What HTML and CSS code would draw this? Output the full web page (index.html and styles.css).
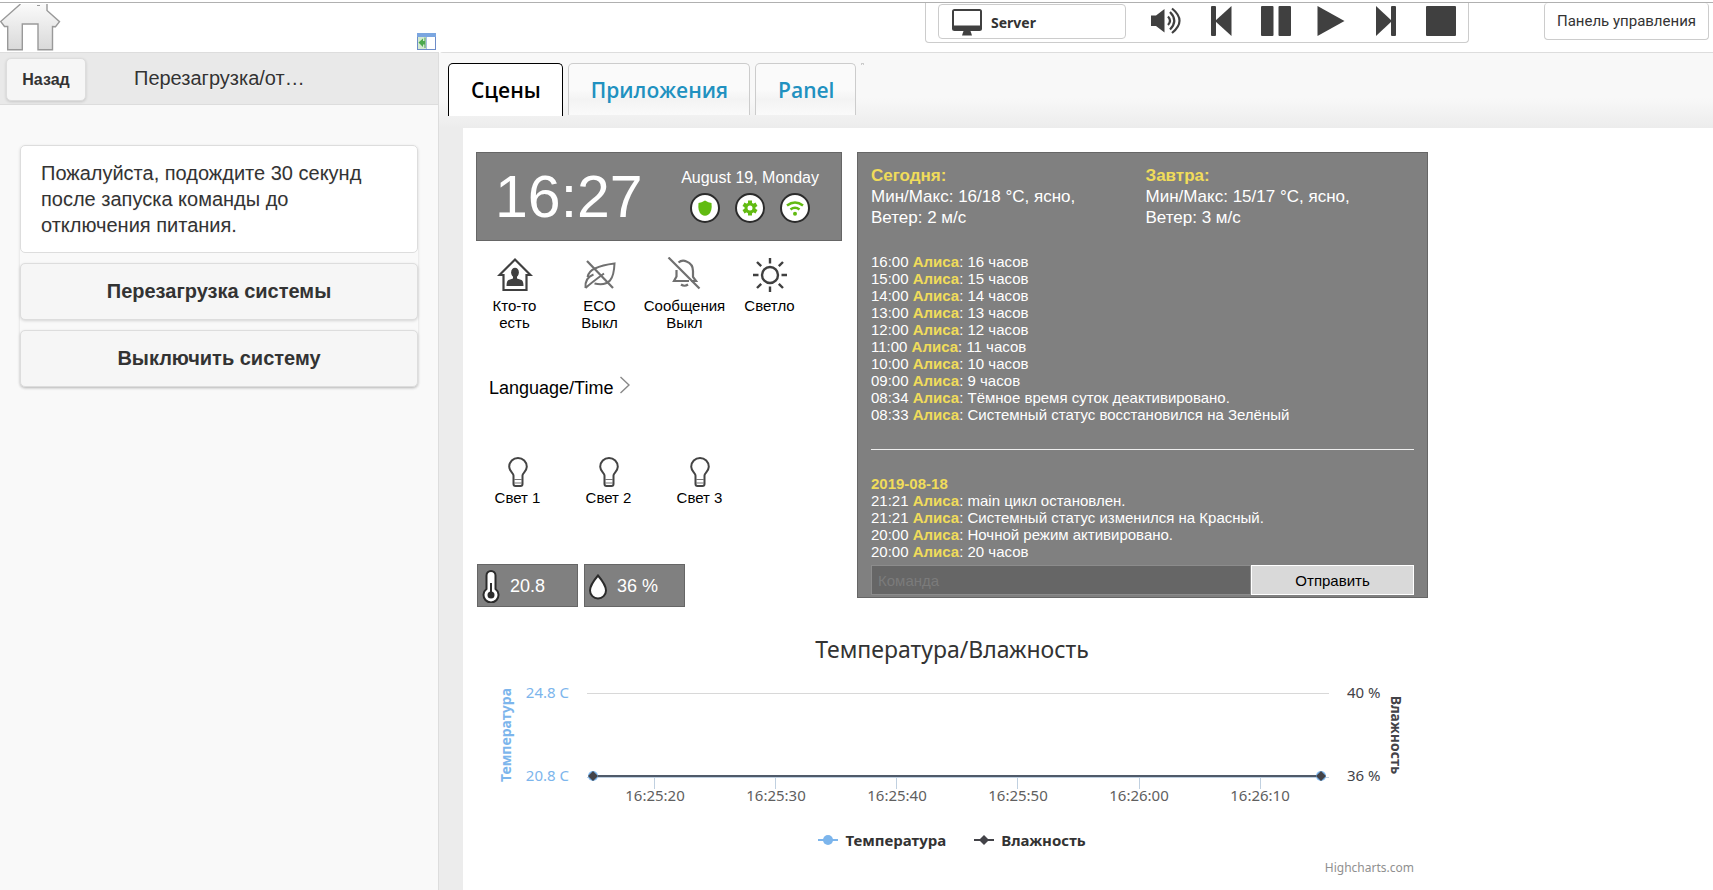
FILE: index.html
```html
<!DOCTYPE html>
<html lang="ru">
<head>
<meta charset="utf-8">
<title>Сцены</title>
<link rel="stylesheet" href="styles.css">
</head>
<body>
<svg class="defs" width="0" height="0" aria-hidden="true">
  <defs>
    <linearGradient id="house-fill" x1="0" y1="0" x2="0" y2="1">
      <stop offset="0" stop-color="#fafafa"/><stop offset="1" stop-color="#d9d9d9"/>
    </linearGradient>
    <symbol id="bulb" viewBox="0 0 20 30">
      <path d="M5.500 20V18.500C5.500 16 1.200 14 1.200 9.800A8.800 8.800 0 0 1 18.800 9.800C18.800 14 14.500 16 14.500 18.500V20M5.500 19V27Q5.500 29 7.500 29H12.500Q14.500 29 14.500 27V19" fill="none" stroke="#444" stroke-width="2"/>
      <path d="M6 22.500H14M6 26H14" stroke="#777" stroke-width="1.200"/>
    </symbol>
  </defs>
</svg>

<header class="topbar">
  <a class="home" href="#" aria-label="Домой">
    <svg width="61" height="47" viewBox="0 0 61 47">
      <path d="M20.500 0L.700 17.500L4.500 22.500H7.700V45.800H22.300V20H38V45.800H52.500V22.500L55.500 22.800L59.500 17.700L47 6.500V0Z" fill="url(#house-fill)"/>
      <path d="M20.500 0L.700 17.500L4.500 22.500H7.700V45.800H22.300V20H38V45.800H52.500V22.500L55.500 22.800L59.500 17.700L47 6.500V0" fill="none" stroke="#999" stroke-width="1.400"/>
      <path d="M37 1.500H40" stroke="#999"/>
    </svg>
  </a>
  <button class="panel-toggle" type="button" aria-label="Скрыть панель">
    <svg width="19" height="17" viewBox="0 0 19 17">
      <rect x=".500" y=".500" width="18" height="16" fill="#fff" stroke="#6d8cc8"/>
      <path d="M0 0H19V4H0Z" fill="#7ba6e0"/>
      <path d="M1 4H9V16H1Z" fill="#d4ead0"/>
      <path d="M9.500 4V16" stroke="#a9bfe0"/>
      <path d="M1.500 9.500L6 5.500V8H8V11.500H6V14Z" fill="#4caa4c"/>
      <path d="M8 4.500V15" stroke="#4f9e58"/>
    </svg>
  </button>
  <div class="player">
    <div class="terminal">
      <svg width="30" height="27" viewBox="0 0 30 27" aria-hidden="true">
        <rect width="30" height="22" rx="2.500" fill="#404040"/>
        <rect x="2" y="2" width="26" height="14.500" fill="#fff"/>
        <path d="M11.500 22H18.500L20 26.500H10Z" fill="#404040"/>
      </svg>
      <select aria-label="Терминал"><option>Server</option></select>
    </div>
    <button type="button" aria-label="Громкость">
      <svg width="30" height="30" viewBox="0 0 30 30">
        <path d="M0 9.500H5L13.500 3V26.500L5 20H0Z" fill="#404040"/>
        <path d="M17 10.500Q21 14.700 17 19M19 6Q27.500 14.700 19 23.500M21 2.500Q36 14.700 21 27" fill="none" stroke="#404040" stroke-width="2.200"/>
      </svg>
    </button>
    <button type="button" aria-label="Предыдущий">
      <svg width="30" height="30" viewBox="0 0 30 30"><rect x="5" width="5" height="30" rx="1" fill="#404040"/><path d="M9 15L25.500 0V30Z" fill="#404040"/></svg>
    </button>
    <button type="button" aria-label="Пауза">
      <svg width="30" height="30" viewBox="0 0 30 30"><rect width="12.500" height="30" rx="1" fill="#404040"/><rect x="17.500" width="12.500" height="30" rx="1" fill="#404040"/></svg>
    </button>
    <button type="button" aria-label="Воспроизвести">
      <svg width="30" height="30" viewBox="0 0 30 30"><path d="M1.500 0L28.500 15L1.500 30Z" fill="#404040"/></svg>
    </button>
    <button type="button" aria-label="Следующий">
      <svg width="30" height="30" viewBox="0 0 30 30"><path d="M21 15L5 0V30Z" fill="#404040"/><rect x="20" width="5" height="30" rx="1" fill="#404040"/></svg>
    </button>
    <button type="button" aria-label="Стоп">
      <svg width="30" height="30" viewBox="0 0 30 30"><rect width="30" height="30" rx="1" fill="#404040"/></svg>
    </button>
  </div>
  <a class="admin" href="#">Панель управления</a>
</header>

<div class="workspace">
  <aside class="sidebar">
    <div class="sidebar-head">
      <button class="back" type="button">Назад</button>
      <h1>Перезагрузка/от…</h1>
    </div>
    <div class="menu">
      <p class="note">Пожалуйста, подождите 30 секунд после запуска команды до отключения питания.</p>
      <button type="button">Перезагрузка системы</button>
      <button type="button">Выключить систему</button>
    </div>
  </aside>

  <main class="main">
    <nav class="tabs">
      <a class="tab active" href="#">Сцены</a>
      <a class="tab" href="#">Приложения</a>
      <a class="tab" href="#">Panel</a>
      <span class="tab-empty"></span>
    </nav>

    <div class="scene">
      <div class="board">
        <div class="controls">
          <section class="clock">
            <time>16:27</time>
            <div class="today">
              <span>August 19, Monday</span>
              <div class="statuses">
                <svg width="30" height="30" viewBox="0 0 30 30"><circle cx="15" cy="15" r="14" fill="#fff" stroke="#2b2b2b" stroke-width="2"/><path d="M15 7.500Q18.500 9.700 21.500 10Q22.500 18.500 18.500 21.500Q15 24 11.500 21.500Q7.500 18.500 8.500 10Q11.500 9.700 15 7.500Z" fill="#62bb12"/></svg>
                <svg width="30" height="30" viewBox="0 0 30 30"><circle cx="15" cy="15" r="14" fill="#fff" stroke="#2b2b2b" stroke-width="2"/><g stroke="#62bb12" stroke-width="4"><path d="M15 7.500V22.500M8.500 11.200L21.500 18.800M8.500 18.800L21.500 11.200"/></g><circle cx="15" cy="15" r="4" fill="#fff" stroke="#62bb12" stroke-width="3"/></svg>
                <svg width="30" height="30" viewBox="0 0 30 30"><circle cx="15" cy="15" r="14" fill="#fff" stroke="#2b2b2b" stroke-width="2"/><g fill="none" stroke="#62bb12" stroke-width="2.600"><path d="M7 12.500Q15 6.500 23 12.500M10.500 16.500Q15 13 19.500 16.500"/></g><circle cx="15" cy="20.700" r="2" fill="#62bb12"/></svg>
              </div>
            </div>
          </section>

          <div class="modes">
            <button type="button">
              <svg width="36" height="36" viewBox="0 0 36 36"><path d="M2.500 18L18 2.500L33.500 18H29.500V33H6.500V18Z" fill="none" stroke="#404040" stroke-width="2.200"/><ellipse cx="18" cy="15.500" rx="3.900" ry="4.800" fill="#404040"/><path d="M16 18H20V21.500L24.500 23Q26.500 24 26.500 29H9.500Q9.500 24 11.500 23L16 21.500Z" fill="#404040"/></svg>
              Кто-то<br>есть
            </button>
            <button type="button">
              <svg width="36" height="36" viewBox="0 0 36 36"><g fill="none" stroke="#707070" stroke-width="2"><path d="M3.500 31Q2.500 21 11.500 17.500M3.500 31Q9 26 22 16.500M5.500 20Q7 14 13 11.500Q20 8 32.500 6.500Q32 19 28 23.500Q23 29 12.500 26.500"/><path d="M5 4L31 31" stroke-width="2.200"/></g></svg>
              ECO<br>Выкл
            </button>
            <button type="button">
              <svg width="36" height="36" viewBox="0 0 36 36"><g fill="none" stroke="#707070" stroke-width="2.200"><path d="M1.500 .500L32.500 31.500M11.500 5.500Q15 2.500 19.500 4.500Q26 7 26 14V20L29 24H24M9.500 13V19.500L7 24H22M14 27.500Q17.500 30 21 27.500"/></g></svg>
              Сообщения<br>Выкл
            </button>
            <button type="button">
              <svg width="36" height="36" viewBox="0 0 36 36"><circle cx="18" cy="18" r="8" fill="none" stroke="#404040" stroke-width="2.400"/><path d="M18 1V6.500M18 29.500V35M1 18H6.500M29.500 18H35M5 5L9.200 9.200M26.800 26.800L31 31M5 31L9.200 26.800M26.800 9.200L31 5" stroke="#404040" stroke-width="2.400"/></svg>
              Светло
            </button>
          </div>

          <a class="submenu" href="#">Language/Time
            <svg width="10" height="18" viewBox="0 0 10 18"><path d="M.500 1L9 9L.500 17" fill="none" stroke="#888" stroke-width="1.400"/></svg>
          </a>

          <div class="lights">
            <button type="button"><svg width="20" height="30"><use href="#bulb"/></svg>Свет 1</button>
            <button type="button"><svg width="20" height="30"><use href="#bulb"/></svg>Свет 2</button>
            <button type="button"><svg width="20" height="30"><use href="#bulb"/></svg>Свет 3</button>
          </div>

          <div class="sensors">
            <div class="sensor">
              <svg width="18" height="33" viewBox="0 0 18 33"><path d="M4.500 5.500A4.500 4.500 0 0 1 13.500 5.500V19A7.500 7.500 0 1 1 4.500 19Z" fill="#fff" stroke="#2b2b2b" stroke-width="2"/><path d="M9 13V24" stroke="#2b2b2b" stroke-width="2"/><circle cx="9" cy="25" r="3.500" fill="#2b2b2b"/></svg>
              20.8
            </div>
            <div class="sensor">
              <svg width="18" height="26" viewBox="0 0 18 26"><path d="M9 1.500Q17 11 17 16.500A8 8 0 0 1 1 16.500Q1 11 9 1.500Z" fill="#fff" stroke="#2b2b2b" stroke-width="2"/></svg>
              36 %
            </div>
          </div>
        </div>

        <section class="info">
          <div class="weather">
            <p><b>Сегодня:</b><br>Мин/Макс: 16/18 °C, ясно,<br>Ветер: 2 м/с</p>
            <p><b>Завтра:</b><br>Мин/Макс: 15/17 °C, ясно,<br>Ветер: 3 м/с</p>
          </div>
          <ul class="log">
            <li>16:00 <b>Алиса</b>: 16 часов</li>
            <li>15:00 <b>Алиса</b>: 15 часов</li>
            <li>14:00 <b>Алиса</b>: 14 часов</li>
            <li>13:00 <b>Алиса</b>: 13 часов</li>
            <li>12:00 <b>Алиса</b>: 12 часов</li>
            <li>11:00 <b>Алиса</b>: 11 часов</li>
            <li>10:00 <b>Алиса</b>: 10 часов</li>
            <li>09:00 <b>Алиса</b>: 9 часов</li>
            <li>08:34 <b>Алиса</b>: Тёмное время суток деактивировано.</li>
            <li>08:33 <b>Алиса</b>: Системный статус восстановился на Зелёный</li>
          </ul>
          <hr>
          <ul class="log">
            <li><b>2019-08-18</b></li>
            <li>21:21 <b>Алиса</b>: main цикл остановлен.</li>
            <li>21:21 <b>Алиса</b>: Системный статус изменился на Красный.</li>
            <li>20:00 <b>Алиса</b>: Ночной режим активировано.</li>
            <li>20:00 <b>Алиса</b>: 20 часов</li>
          </ul>
          <form class="command">
            <input type="text" placeholder="Команда" aria-label="Команда">
            <button type="button">Отправить</button>
          </form>
        </section>
      </div>

      <section class="chart">
        <h2>Температура/Влажность</h2>
        <svg class="plot" viewBox="0 0 952 140" role="img" aria-label="Температура/Влажность">
          <path d="M111 22.500H853" stroke="#d8d8d8"/>
          <path d="M111 106.500H853" stroke="#c0d0e0"/>
          <path d="M178.500 106V118M299.500 106V118M420.500 106V118M541.500 106V118M663.500 106V118M784.500 106V118" stroke="#c0d0e0"/>
          <path d="M117 105H845" stroke="#7cb5ec" stroke-width="2"/>
          <path d="M117 105H845" stroke="#434348" stroke-opacity=".8" stroke-width="2"/>
          <circle cx="117" cy="105" r="5" fill="#7cb5ec"/><circle cx="845" cy="105" r="5" fill="#7cb5ec"/>
          <path d="M117 100L122 105L117 110L112 105ZM845 100L850 105L845 110L840 105Z" fill="#434348"/>
          <g class="axis temp" text-anchor="end"><text x="93" y="27">24.8 C</text><text x="93" y="110">20.8 C</text></g>
          <g class="axis hum"><text x="871" y="27">40 %</text><text x="871" y="110">36 %</text></g>
          <g class="axis" text-anchor="middle">
            <text x="179" y="130">16:25:20</text><text x="300" y="130">16:25:30</text><text x="421" y="130">16:25:40</text>
            <text x="542" y="130">16:25:50</text><text x="663" y="130">16:26:00</text><text x="784" y="130">16:26:10</text>
          </g>
          <g class="axis-title" text-anchor="middle">
            <text class="temp" transform="translate(35 64) rotate(-90)">Температура</text>
            <text class="hum" transform="translate(915 64) rotate(90)">Влажность</text>
          </g>
        </svg>
        <div class="legend">
          <button type="button"><svg width="20" height="12" viewBox="0 0 20 12"><path d="M0 6H20" stroke="#7cb5ec" stroke-width="2"/><circle cx="10" cy="6" r="5" fill="#7cb5ec"/></svg>Температура</button>
          <button type="button"><svg width="20" height="12" viewBox="0 0 20 12"><path d="M0 6H20" stroke="#434348" stroke-width="2"/><path d="M10 1L15 6L10 11L5 6Z" fill="#434348"/></svg>Влажность</button>
        </div>
        <a class="credits" href="#">Highcharts.com</a>
      </section>
    </div>
  </main>
</div>
</body>
</html>
```
FILE: styles.css
```css
* { box-sizing: border-box; }
body {
  margin: 0;
  padding-top: 2px;
  min-height: 100vh;
  display: flex;
  flex-direction: column;
  background: #fff;
  color: #000;
  font-family: "Liberation Sans", Arial, sans-serif;
}
p, h1, h2, ul { margin: 0; padding: 0; font-weight: normal; }
a { color: inherit; text-decoration: none; }
button, input, select { font: inherit; color: inherit; margin: 0; padding: 0; border: 0; background: none; cursor: pointer; }
svg { display: block; flex: none; }
.defs { position: absolute; }

/* Top bar */
.topbar { display: flex; align-items: flex-start; height: 50px; border-top: 1px solid #b0b0b0; }
.home { padding-top: 1px; }
.panel-toggle { margin: 30px auto 0 356px; }
.player {
  display: flex;
  align-items: flex-start;
  gap: 25px;
  height: 40px;
  padding: 1px 12px 0;
  margin-right: 75px;
  border: 1px solid #ccc;
  border-top: 0;
  border-radius: 0 0 4px 4px;
}
.player > button { padding-top: 2px; }
.terminal {
  display: flex;
  align-items: center;
  gap: 9px;
  width: 188px;
  height: 35px;
  padding-left: 13px;
  border: 1px solid #ccc;
  border-radius: 4px;
}
.terminal svg { margin-top: 2px; }
.terminal select { flex: 1; margin-top: 2px; appearance: none; font: bold 14px "Noto Sans", sans-serif; color: #333; }
.admin {
  width: 165px;
  margin-right: 4px;
  border: 1px solid #ccc;
  border-top: 0;
  border-radius: 4px;
  color: #333;
  font: 15px/36px Roboto, sans-serif;
  text-align: center;
  white-space: nowrap;
}

.workspace { display: flex; flex: 1; }

/* Sidebar */
.sidebar { flex: 0 0 439px; border-right: 1px solid #ddd; background: #f9f9f9; color: #333; text-shadow: 0 1px 0 #f3f3f3; }
.sidebar-head {
  display: flex;
  align-items: flex-start;
  gap: 48px;
  height: 53px;
  padding: 5px 6px 0;
  border: solid #ddd;
  border-width: 1px 0;
  background: #e9e9e9;
}
.sidebar-head h1 { padding-top: 7px; font-size: 20px; line-height: 26px; }
.back {
  width: 80px;
  height: 43px;
  border: 1px solid #ddd;
  border-radius: 5px;
  background: #f6f6f6;
  box-shadow: 0 1px 3px rgba(0, 0, 0, .15);
  font-size: 16px;
  font-weight: bold;
}
.menu { display: flex; flex-direction: column; gap: 10px; margin: 40px 20px 0; font-size: 20px; line-height: 26px; border-radius: 5px; box-shadow: 0 1px 3px rgba(0, 0, 0, .15); }
.note { padding: 14px 20px; border: 1px solid #ddd; border-radius: 5px; background: #fff; }
.menu button {
  padding: 14px;
  border: 1px solid #ddd;
  border-radius: 5px;
  background: #f6f6f6;
  box-shadow: 0 1px 3px rgba(0, 0, 0, .15);
  font-weight: bold;
  line-height: 27px;
}

/* Tabs */
.main { flex: 1; min-width: 0; display: flex; flex-direction: column; background: #ececec; border-top: 1px solid #ddd; border-top-left-radius: 4px; }
.tabs {
  display: flex;
  align-items: flex-start;
  gap: 5px;
  height: 75px;
  padding: 10px 9px 0;
  background: linear-gradient(#f8f8f8 60%, #ececec);
}
.tab {
  padding: 1px 21px 0 22px;
  border: 1px solid #ccc;
  border-bottom: 0;
  border-radius: 5px 5px 0 0;
  background: linear-gradient(#fafafa 50%, #f3f3f3 70%, #fafafa);
  color: #2191c0;
  font: 600 21px/50px "Open Sans", sans-serif;
}
.tab.active { padding-bottom: 1px; border-color: #000; background: #fff; color: #000; }
.tab-empty { width: 3px; height: 2px; border: 1px solid #ccc; border-bottom: 0; }

/* Scene */
.scene { flex: 1; margin-left: 24px; padding: 24px 13px 0; background: #fff; }
.board { display: grid; grid-template-columns: 366fr 571fr; gap: 15px; align-items: start; max-width: 952px; }
.clock {
  display: flex;
  align-items: center;
  justify-content: space-between;
  height: 89px;
  padding: 0 22px 0 18px;
  border: 1px solid #666;
  background: #808080;
  color: #fff;
}
.clock time { font-size: 59px; line-height: 68px; }
.today { display: flex; flex-direction: column; align-items: center; gap: 5px; padding-bottom: 3px; font-size: 16px; line-height: 20px; }
.statuses { display: flex; gap: 15px; }

.modes { display: flex; margin-top: 16px; margin-left: -4px; }
.modes button, .lights button { display: flex; flex-direction: column; align-items: center; font-size: 15px; line-height: 17px; }
.modes button { width: 85px; gap: 4px; }
.submenu { display: flex; gap: 7px; margin: 45px 0 0 13px; font-size: 18px; line-height: 24px; }
.lights { display: flex; margin: 57px 0 0 -4px; }
.lights button { width: 91px; gap: 2px; }
.sensors { display: flex; gap: 6px; margin: 58px 0 0 1px; }
.sensor { display: flex; align-items: center; gap: 10px; width: 101px; height: 43px; padding: 2px 4px 0; border: 1px solid #666; background: #808080; color: #fff; font-size: 18px; }

.info { padding: 12px 13px 2px; border: 1px solid #666; background: #808080; color: #fff; }
.info b { color: #f0dc5a; }
.weather { display: grid; grid-template-columns: 1fr 1fr; column-gap: 6px; font-size: 17px; line-height: 21px; }
.log { list-style: none; margin-top: 25px; font-size: 15px; line-height: 17px; }
.info hr { height: 1px; margin: 26px 0 0; border: 0; background: #eee; }
.command { display: grid; grid-template-columns: 7fr 3fr; height: 30px; margin-top: 5px; font-size: 15px; }
.command input { min-width: 0; padding: 0 6px; border: 1px solid #8c8c8c; background: #666; cursor: text; }
.command input::placeholder { color: #7b7b7b; }
.command button { border: 1px solid #fff; background: #d9d9d9; color: #000; }

/* Chart */
.chart { max-width: 952px; margin-top: 24px; display: flex; flex-direction: column; font-family: "Noto Sans", sans-serif; color: #333; }
.chart h2 { font-size: 23px; line-height: 36px; text-align: center; }
.plot { width: 100%; margin-top: 4px; }
.axis { font-size: 15px; fill: #606060; }
.axis-title { font-size: 14px; font-weight: bold; }
.axis.temp, .axis-title .temp { fill: #7cb5ec; }
.axis.hum, .axis-title .hum { fill: #434348; }
.legend { display: flex; justify-content: center; gap: 28px; margin-top: 19px; font-size: 15px; font-weight: bold; line-height: 20px; }
.legend button { display: flex; align-items: center; gap: 7px; }
.credits { align-self: flex-end; margin: 10px 14px 0 0; color: #909090; font-size: 12px; line-height: 16px; }
```
